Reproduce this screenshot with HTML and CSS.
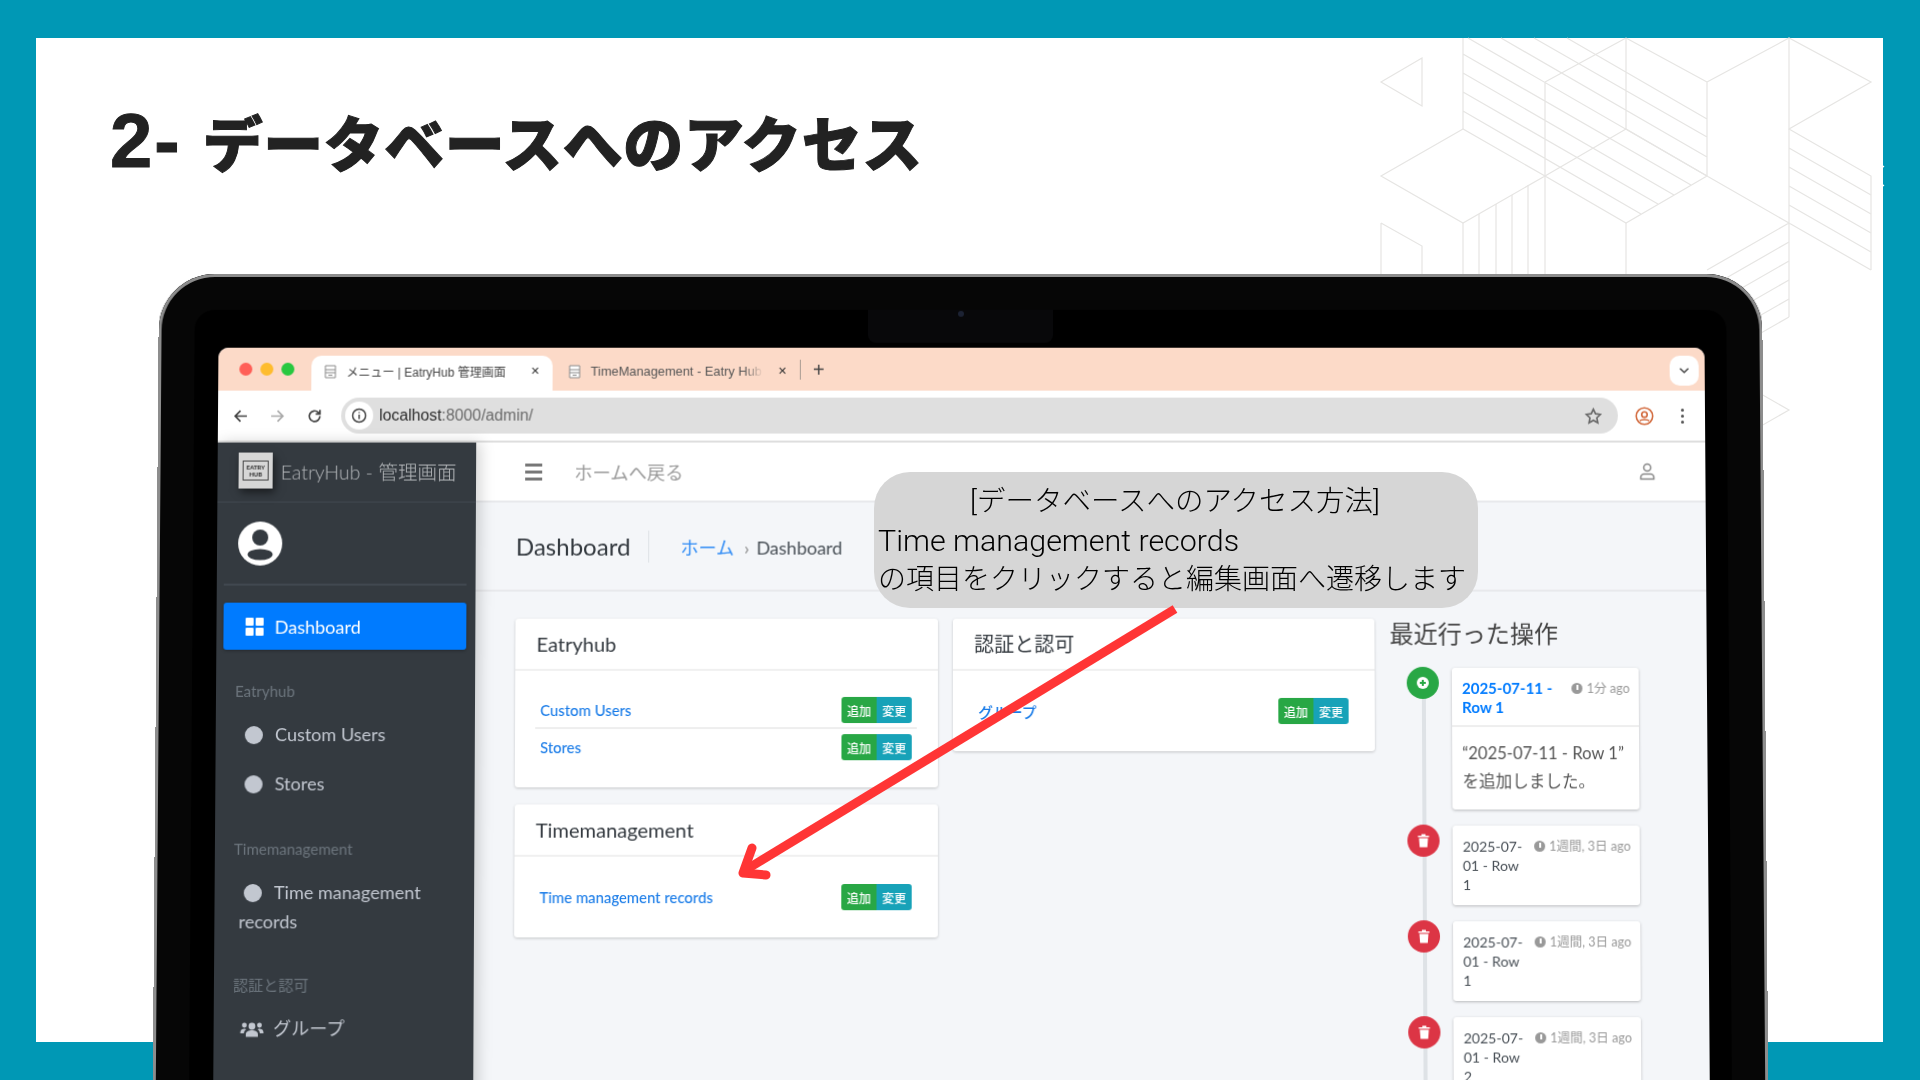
FILE: index.html
```html
<!DOCTYPE html>
<html lang="ja">

<head>
    <meta charset="UTF-8">
    <title>2- データベースへのアクセス</title>
    <link rel="stylesheet" href="styles.css">
</head>

<body>
    <div class="slide">
        <h1 class="slide-title"><span class="title-num">2-</span> データベースへのアクセス</h1>
    </div>

    <!-- background pattern, coordinates are page pixels -->
    <svg class="pattern" viewBox="0 0 1920 1080" fill="none">
        <path d="M1422 58L1381 82L1422 106ZM1463 38V129M1545 82V176M1626 38V129M1707 82V176M1789 38V129M1468 38L1707 176M1463 54L1691 185M1463 73L1674 195M1463 92L1658 204M1463 111L1641 214M1501 38L1707 157M1534 38L1707 137M1567 38L1707 119M1545 82L1626 38M1707 82L1789 38L1871 82L1789 129L1871 176V270M1707 82L1626 38" />
        <path d="M1463 129L1381 176L1463 223L1545 176ZM1626 129L1545 176L1626 223L1707 176ZM1707 176L1789 223L1707 270M1789 129V317M1789 148L1871 195M1789 167L1871 214M1789 186L1871 233M1789 205L1871 252M1789 223L1871 270" />
        <path d="M1479 214V280M1496 204V280M1512 195V280M1528 185V280M1545 176V280M1463 223V280M1381 223L1422 246V280M1381 223V280M1626 223V280M1707 289L1789 242M1707 308L1789 261M1707 327L1789 280M1707 346L1789 299M1789 317L1740 345M1740 382L1789 410L1740 438" />
        <path class="pattern-tick" d="M1884 166L1873 176L1884 186" />
    </svg>

    <div class="laptop">
        <div class="notch"><span class="camera"></span></div>
        <div class="screen">
            <div class="tabbar">
                <div class="lights"><span class="light red"></span><span class="light yellow"></span><span class="light green"></span></div>
                <div class="tab active">
                    <svg class="favicon" viewBox="0 0 12 14"><path d="M1 1h10v12H1zM1 5h10M1 8h10M4 10.500h4" /></svg>
                    <span class="tab-text">メニュー | EatryHub 管理画面</span>
                    <span class="tab-close">✕</span>
                </div>
                <div class="tab second">
                    <svg class="favicon" viewBox="0 0 12 14"><path d="M1 1h10v12H1zM1 5h10M1 8h10M4 10.500h4" /></svg>
                    <span class="tab-text fade">TimeManagement - Eatry Hub</span>
                    <span class="tab-close">✕</span>
                </div>
                <span class="tab-sep"></span>
                <span class="tab-new">+</span>
                <span class="tab-menu">
                    <svg viewBox="0 0 12 8" width="11" height="8"><path d="M1.500 1.500L6 6l4.500-4.500" /></svg>
                </span>
            </div>
            <div class="toolbar">
                <svg class="tool-icon" viewBox="0 0 16 16"><path d="M14 8H3M8 3L3 8l5 5" /></svg>
                <svg class="tool-icon off" viewBox="0 0 16 16"><path d="M2 8h11M8 3l5 5-5 5" /></svg>
                <svg class="tool-icon" viewBox="0 0 16 16"><path d="M13 8a5 5 0 1 1-1.500-3.500L13 6M13 2v4H9" /></svg>
                <div class="omnibox">
                    <span class="info"><svg viewBox="0 0 16 16" width="16" height="16"><circle cx="8" cy="8" r="6.500" /><path d="M8 7v4.500M8 4.500v1" /></svg></span>
                    <span class="url"><b>localhost</b>:8000/admin/</span>
                    <svg class="star" viewBox="0 0 16 16"><path d="M8 1.500l2 4.300 4.700.6-3.500 3.200.9 4.700L8 12l-4.100 2.300.9-4.700L1.300 6.400 6 5.800z" /></svg>
                </div>
                <svg class="profile" viewBox="0 0 18 18"><circle cx="9" cy="9" r="7.800" /><circle cx="9" cy="7.500" r="2.600" /><path d="M4.500 13.500c1.500-1.600 7.500-1.600 9 0" /></svg>
                <span class="kebab"><i></i><i></i><i></i></span>
            </div>

            <div class="page">
                <aside class="sidebar">
                    <div class="brand">
                        <span class="logo"><span class="logo-mark">EATRY<br>HUB</span></span>
                        <span class="brand-text">EatryHub - 管理画面</span>
                    </div>
                    <div class="user-panel">
                        <svg viewBox="0 0 44 44" width="44" height="44">
                            <circle cx="22" cy="22" r="22" fill="#fff" />
                            <circle cx="22" cy="16" r="8" fill="#343a40" />
                            <ellipse cx="22" cy="33" rx="12.500" ry="5.500" fill="#343a40" />
                        </svg>
                    </div>
                    <a class="nav-active">
                        <span class="grid-icon"><i></i><i></i><i></i><i></i></span>
                        Dashboard
                    </a>
                    <div class="nav-head first">Eatryhub</div>
                    <a class="nav-item"><span class="dot"></span>Custom Users</a>
                    <a class="nav-item"><span class="dot"></span>Stores</a>
                    <div class="nav-head">Timemanagement</div>
                    <a class="nav-item"><span class="dot"></span>Time management records</a>
                    <div class="nav-head last">認証と認可</div>
                    <a class="nav-item">
                        <svg class="group-icon" viewBox="0 0 24 18" width="24" height="18">
                            <circle cx="12" cy="6" r="3.400" /><circle cx="4.500" cy="5" r="2.400" /><circle cx="19.500" cy="5" r="2.400" />
                            <path d="M6 16.500v-2.500c0-3 3-4 6-4s6 1 6 4v2.500zM0.500 12c0-2.500 2-3.500 4-3.500 1 0 1.500.2 2 .6-1.500.9-2.300 2.100-2.400 3.900H0.500zM23.500 12c0-2.500-2-3.500-4-3.500-1 0-1.500.2-2 .6 1.500.9 2.300 2.100 2.400 3.900h3.600z" />
                        </svg>グループ
                    </a>
                </aside>

                <main class="main">
                    <nav class="topnav">
                        <span class="burger"><i></i><i></i><i></i></span>
                        <span class="home-link">ホームへ戻る</span>
                        <svg class="nav-user" viewBox="0 0 16 18" width="16" height="18"><circle cx="8" cy="5" r="3.500" /><path d="M1.500 16.500v-2c0-2 2-3 3-3h7c1 0 3 1 3 3v2z" /></svg>
                    </nav>
                    <header class="content-head">
                        <h2>Dashboard</h2>
                        <span class="crumbs"><a>ホーム</a><span class="crumb-sep">›</span>Dashboard</span>
                    </header>

                    <div class="columns">
                        <div class="col">
                            <section class="card">
                                <h3 class="card-head">Eatryhub</h3>
                                <div class="card-body">
                                    <div class="model-row divided">
                                        <a>Custom Users</a>
                                        <span class="btns"><span class="btn add">追加</span><span class="btn edit">変更</span></span>
                                    </div>
                                    <div class="model-row">
                                        <a>Stores</a>
                                        <span class="btns"><span class="btn add">追加</span><span class="btn edit">変更</span></span>
                                    </div>
                                </div>
                            </section>
                            <section class="card">
                                <h3 class="card-head">Timemanagement</h3>
                                <div class="card-body">
                                    <div class="model-row">
                                        <a>Time management records</a>
                                        <span class="btns"><span class="btn add">追加</span><span class="btn edit">変更</span></span>
                                    </div>
                                </div>
                            </section>
                        </div>
                        <div class="col">
                            <section class="card">
                                <h3 class="card-head">認証と認可</h3>
                                <div class="card-body">
                                    <div class="model-row">
                                        <a>グループ</a>
                                        <span class="btns"><span class="btn add">追加</span><span class="btn edit">変更</span></span>
                                    </div>
                                </div>
                            </section>
                        </div>
                        <div class="recent">
                            <h3>最近行った操作</h3>
                            <div class="timeline">
                                <div class="tl-item">
                                    <span class="tl-badge green">
                                        <svg viewBox="0 0 14 14" width="14" height="14"><circle cx="7" cy="7" r="6" fill="#fff" /><path d="M7 4v6M4 7h6" stroke="#28a745" stroke-width="2" /></svg>
                                    </span>
                                    <div class="tl-card">
                                        <div class="tl-head">
                                            <a class="tl-title">2025-07-11 - Row 1</a>
                                            <span class="tl-time"><span class="clock"></span>1分 ago</span>
                                        </div>
                                        <div class="tl-body">“2025-07-11 - Row 1”<br>を追加しました。</div>
                                    </div>
                                </div>
                                <div class="tl-item">
                                    <span class="tl-badge red">
                                        <svg viewBox="0 0 12 14" width="12" height="14"><path d="M0.500 2h11v1.500H0.500zM4 0.500h4V2H4zM1.500 4.500h9L9.800 13.500H2.200z" fill="#fff" /></svg>
                                    </span>
                                    <div class="tl-card short">
                                        <div class="tl-title dark">2025-07-01 - Row 1</div>
                                        <span class="tl-time"><span class="clock"></span>1週間, 3日 ago</span>
                                    </div>
                                </div>
                                <div class="tl-item">
                                    <span class="tl-badge red">
                                        <svg viewBox="0 0 12 14" width="12" height="14"><path d="M0.500 2h11v1.500H0.500zM4 0.500h4V2H4zM1.500 4.500h9L9.800 13.500H2.200z" fill="#fff" /></svg>
                                    </span>
                                    <div class="tl-card short">
                                        <div class="tl-title dark">2025-07-01 - Row 1</div>
                                        <span class="tl-time"><span class="clock"></span>1週間, 3日 ago</span>
                                    </div>
                                </div>
                                <div class="tl-item">
                                    <span class="tl-badge red">
                                        <svg viewBox="0 0 12 14" width="12" height="14"><path d="M0.500 2h11v1.500H0.500zM4 0.500h4V2H4zM1.500 4.500h9L9.800 13.500H2.200z" fill="#fff" /></svg>
                                    </span>
                                    <div class="tl-card short">
                                        <div class="tl-title dark">2025-07-01 - Row 2</div>
                                        <span class="tl-time"><span class="clock"></span>1週間, 3日 ago</span>
                                    </div>
                                </div>
                            </div>
                        </div>
                    </div>
                </main>
            </div>
        </div>
    </div>

    <!-- annotation on top of the laptop -->
    <div class="callout">
        <div class="callout-title">[データベースへのアクセス方法]</div>
        <div class="callout-latin">Time management records</div>
        <div>の項目をクリックすると編集画面へ遷移します</div>
    </div>
    <svg class="arrow" viewBox="0 0 1920 1080" fill="none">
        <path d="M1175 609L744 871" stroke-linecap="butt" />
        <path d="M752 848L743 873L766 875" stroke-linecap="round" stroke-linejoin="round" />
    </svg>
</body>

</html>
```

FILE: styles.css
```css
html,
body {
    margin: 0;
    height: 100%;
    overflow: hidden;
}

body {
    position: relative;
    background: #0098b5;
    font-family: "Lato", "Noto Sans CJK JP", sans-serif;
    color: #343a40;
}

h1,
h2,
h3 {
    margin: 0;
    font-weight: 400;
}

/* slide */
.slide {
    background: #fff;
    margin: 0 37px 0 36px;
    height: 1004px;
    position: relative;
    top: 38px;
    padding: 65px 0 0 74px;
    box-sizing: border-box;
}

.slide-title {
    font-family: "Noto Sans CJK JP", sans-serif;
    font-weight: 900;
    font-size: 60px;
    line-height: 76px;
    color: #222;
    letter-spacing: 0.5px;
    -webkit-text-stroke: 1px #222;
    white-space: nowrap;
}

.title-num {
    font-family: "Liberation Sans", sans-serif;
    font-weight: 700;
    font-size: 76px;
    line-height: 60px;
    letter-spacing: 2px;
    margin-right: 7px;
}

.pattern {
    position: absolute;
    inset: 0;
    width: 1920px;
    height: 1080px;
    stroke: #e6e5e3;
    stroke-width: 1.2;
}

.pattern-tick {
    stroke: #fff;
}

/* laptop */
.laptop {
    position: absolute;
    left: 159px;
    top: 274px;
    width: 1603px;
    height: 900px;
    box-sizing: border-box;
    padding: 74px 58px 0 60px;
    background: #000;
    border-radius: 56px 56px 0 0;
    box-shadow: inset 0 0 0 3px #8d8d8d, inset 0 0 0 36px #060606;
    transform: perspective(2000px) rotateX(1.1deg) scaleY(0.996);
    transform-origin: 50% 0;
}

.notch {
    position: absolute;
    left: 709px;
    top: 36px;
    width: 185px;
    height: 32px;
    background: #08080a;
    border-radius: 0 0 8px 8px;
    display: flex;
    justify-content: center;
    padding-top: 1px;
}

.camera {
    width: 6px;
    height: 6px;
    border-radius: 50%;
    background: #1c2233;
}

.screen {
    height: 800px;
    border-radius: 10px 10px 0 0;
    overflow: hidden;
    background: #f4f6f9;
    filter: blur(0.5px);
    display: flex;
    flex-direction: column;
}

/* browser tabs */
.tabbar {
    height: 43px;
    flex: none;
    background: #fcdac8;
    display: flex;
    align-items: flex-end;
    font-size: 12px;
    color: #444;
    font-family: "Liberation Sans", "Noto Sans CJK JP", sans-serif;
}

.lights {
    display: flex;
    gap: 8px;
    align-self: center;
    margin: 0 17px 0 21px;
}

.light {
    width: 13px;
    height: 13px;
    border-radius: 50%;
}

.light.red {
    background: #ff5f57;
}

.light.yellow {
    background: #febc2e;
}

.light.green {
    background: #28c840;
}

.tab {
    width: 241px;
    height: 35px;
    box-sizing: border-box;
    padding: 0 10px 4px 13px;
    display: flex;
    align-items: center;
    border-radius: 10px 10px 0 0;
    flex: none;
}

.tab.active {
    background: #fff;
}

.tab.second {
    width: 252px;
    padding-left: 16px;
    padding-right: 15px;
    font-size: 12.800px;
}

.favicon {
    width: 12px;
    height: 14px;
    flex: none;
    fill: #fff;
    stroke: #8a8a8a;
    stroke-width: 1;
    margin-right: 10px;
}

.tab-text {
    flex: 1;
    white-space: nowrap;
}

.tab-text.fade {
    color: #555;
    -webkit-mask-image: linear-gradient(90deg, #000 86%, transparent 97%);
    mask-image: linear-gradient(90deg, #000 86%, transparent 97%);
}

.tab-close {
    font-size: 11px;
    margin-left: 9px;
    width: 12px;
    color: #333;
}

.tab-sep {
    width: 1px;
    height: 20px;
    background: #a89b92;
    align-self: center;
    margin: 0 12px 0 -5px;
}

.tab-new {
    font-size: 20px;
    align-self: center;
    line-height: 1;
}

.tab-menu {
    margin: 0 6px 5px auto;
    width: 29px;
    height: 30px;
    background: #fff;
    border-radius: 10px;
    display: flex;
    align-items: center;
    justify-content: center;
}

.tab-menu path {
    fill: none;
    stroke: #444;
    stroke-width: 1.6;
}

/* browser toolbar */
.toolbar {
    flex: none;
    background: #fff;
    border-bottom: 2px solid #dedede;
    box-sizing: border-box;
    height: 52px;
    display: flex;
    align-items: center;
    padding: 0 0 0 14px;
}

.tool-icon {
    width: 17px;
    height: 17px;
    margin-right: 20px;
    fill: none;
    stroke: #444;
    stroke-width: 1.600;
    flex: none;
}

.tool-icon.off {
    stroke: #aaa;
}

.omnibox {
    width: 1275px;
    height: 36px;
    margin-left: -2px;
    background: #dfdfdf;
    border-radius: 18px;
    display: flex;
    align-items: center;
    flex: none;
    font-family: "Liberation Sans", sans-serif;
}

.info {
    width: 28px;
    height: 28px;
    margin-left: 4px;
    background: #fff;
    border-radius: 50%;
    display: flex;
    align-items: center;
    justify-content: center;
}

.info svg {
    fill: none;
    stroke: #444;
    stroke-width: 1.500;
}

.url {
    font-size: 15.800px;
    color: #6a6a6a;
    margin-left: 6px;
}

.url b {
    font-weight: 400;
    color: #2b2b2b;
}

.star {
    width: 17px;
    height: 17px;
    margin-left: auto;
    margin-right: 16px;
    fill: none;
    stroke: #666;
    stroke-width: 1.500;
}

.profile {
    width: 19px;
    height: 19px;
    margin-left: 17px;
    fill: none;
    stroke: #d2693c;
    stroke-width: 1.500;
    flex: none;
}

.kebab {
    display: flex;
    flex-direction: column;
    gap: 3px;
    margin-left: 27px;
}

.kebab i {
    width: 3px;
    height: 3px;
    border-radius: 50%;
    background: #555;
}

/* admin page */
.page {
    flex: 1;
    display: flex;
    min-height: 0;
}

.sidebar {
    width: 258px;
    flex: none;
    box-sizing: border-box;
    padding: 0 9px 0 7px;
    background: #343a40;
    color: #c2c7d0;
    font-size: 18px;
    box-shadow: 4px 0 14px rgba(0, 0, 0, 0.18);
    position: relative;
}

.brand {
    height: 60px;
    margin: 0 -9px 0 -7px;
    padding: 0 0 3px 21px;
    box-sizing: border-box;
    border-bottom: 1px solid #414850;
    display: flex;
    align-items: center;
    gap: 8px;
}

.logo {
    width: 34px;
    height: 36px;
    background: #d6d6d6;
    box-shadow: 2px 4px 8px rgba(0, 0, 0, 0.5);
    display: flex;
    align-items: center;
    justify-content: center;
}

.logo-mark {
    width: 24px;
    border: 1px solid #444;
    font-size: 6px;
    line-height: 7px;
    font-weight: 900;
    color: #333;
    text-align: center;
    padding: 2px 0;
}

.brand-text {
    font-size: 19.500px;
    font-weight: 300;
    color: #b4b7ba;
    white-space: nowrap;
}

.user-panel {
    height: 83px;
    box-sizing: border-box;
    padding: 19px 0 0 14px;
    border-bottom: 2px solid #414850;
}

.nav-active {
    margin-top: 17px;
    height: 47px;
    padding-left: 22px;
    display: flex;
    align-items: center;
    gap: 11px;
    background: #007bff;
    color: #fff;
    border-radius: 3px;
    box-shadow: 0 1px 3px rgba(0, 0, 0, 0.3);
}

.grid-icon {
    display: grid;
    grid-template-columns: 8px 8px;
    gap: 2px;
}

.grid-icon i {
    height: 8px;
    background: #fff;
    border-radius: 1px;
}

.nav-head {
    height: 34px;
    line-height: 34px;
    margin: 23px 0 2px 12px;
    font-size: 15px;
    color: #6c757d;
}

.nav-head.first {
    margin-top: 24px;
}

.nav-head.last {
    margin-top: 21px;
}

.nav-item {
    display: block;
    padding: 10px 20px 10px 17px;
    line-height: 29px;
}

.dot {
    display: inline-block;
    width: 18px;
    height: 18px;
    margin: 0 12px 0 5px;
    vertical-align: -3px;
    border-radius: 50%;
    background: #c2c7d0;
}

.group-icon {
    fill: #c2c7d0;
    margin-right: 9px;
    margin-left: 2px;
    vertical-align: -3px;
}

.main {
    flex: 1;
    min-width: 0;
}

.topnav {
    height: 60px;
    box-sizing: border-box;
    background: #fff;
    border-bottom: 2px solid #e8e9ec;
    display: flex;
    align-items: center;
    padding: 0 50px 0 49px;
}

.burger {
    display: flex;
    flex-direction: column;
    gap: 4px;
    margin-right: 32px;
}

.burger i {
    width: 17px;
    height: 3px;
    background: #777;
}

.home-link {
    font-size: 18.300px;
    color: #9a9a9a;
}

.nav-user {
    margin-left: auto;
    fill: #fff;
    stroke: #888;
    stroke-width: 1.500;
}

.content-head {
    height: 89px;
    box-sizing: border-box;
    border-bottom: 2px solid #e8e9ec;
    display: flex;
    align-items: center;
    padding: 0 0 0 40px;
}

.content-head h2 {
    font-size: 24px;
    color: #343a40;
    padding-right: 18px;
    margin-right: 31px;
    line-height: 32px;
    border-right: 1px solid #dee2e6;
}

.crumbs {
    font-size: 18px;
    color: #495057;
}

.crumbs a {
    color: #2f8bf5;
}

.crumb-sep {
    color: #888;
    margin: 0 7px 0 10px;
}

.columns {
    display: grid;
    grid-template-columns: 421px 420px 1fr;
    column-gap: 15px;
    padding: 27px 0 0 40px;
    align-items: start;
}

.col {
    display: flex;
    flex-direction: column;
    gap: 17px;
}

.card {
    background: #fff;
    border-radius: 3px;
    box-shadow: 0 1px 3px rgba(0, 0, 0, 0.2);
}

.card-head {
    height: 52px;
    box-sizing: border-box;
    padding-left: 21px;
    line-height: 51px;
    font-size: 20px;
    color: #343a40;
    border-bottom: 2px solid #f0f0f0;
}

.card-body {
    padding: 22px 21px 22px 20px;
}

.model-row {
    height: 36px;
    box-sizing: border-box;
    display: flex;
    align-items: center;
    justify-content: space-between;
    padding: 0 5px;
    font-size: 14.800px;
    font-weight: 500;
    color: #1a7ce8;
}

.model-row.divided {
    border-bottom: 2px solid #eee;
}

.btns {
    display: flex;
    height: 26px;
    font-size: 12px;
    color: #fff;
    border-radius: 3px;
    overflow: hidden;
}

.btn {
    width: 35px;
    display: flex;
    align-items: center;
    justify-content: center;
}

.btn.add {
    background: #28a745;
}

.btn.edit {
    background: #17a2b8;
}

/* recent actions */
.recent h3 {
    font-size: 24px;
    line-height: 28px;
    color: #444;
    margin: 1px 0 20px;
}

.timeline {
    position: relative;
    padding-left: 62px;
    width: 186px;
    display: flex;
    flex-direction: column;
    gap: 16px;
}

.timeline::before {
    content: "";
    position: absolute;
    left: 32px;
    top: 0;
    bottom: -200px;
    width: 4px;
    background: #dee2e6;
}

.tl-item {
    position: relative;
}

.tl-badge {
    position: absolute;
    left: -45px;
    top: -1px;
    width: 32px;
    height: 32px;
    border-radius: 50%;
    display: flex;
    align-items: center;
    justify-content: center;
}

.tl-badge.green {
    background: #28a745;
}

.tl-badge.red {
    background: #dc3545;
}

.tl-card {
    background: #fff;
    border-radius: 3px;
    box-shadow: 0 1px 3px rgba(0, 0, 0, 0.25);
    font-size: 15px;
}

.tl-head {
    height: 59px;
    box-sizing: border-box;
    padding: 11px 9px 0 10px;
    border-bottom: 2px solid #eee;
    display: flex;
    justify-content: space-between;
    line-height: 19px;
}

.tl-title {
    width: 100px;
    color: #007bff;
    font-weight: 700;
}

.tl-title.dark {
    color: #495057;
    font-weight: 400;
    font-size: 14px;
    width: 64px;
}

.tl-time {
    font-size: 12.500px;
    color: #999;
    white-space: nowrap;
    line-height: 19px;
}

.tl-head .tl-title {
    width: 92px;
}

/* clock face, the hand is a small white tick */
.clock {
    position: relative;
    display: inline-block;
    width: 11px;
    height: 11px;
    border-radius: 50%;
    background: #999;
    margin-right: 4px;
    vertical-align: -1px;
}

.clock::after {
    content: "";
    position: absolute;
    left: 5px;
    top: 2px;
    width: 2px;
    height: 5px;
    background: #fff;
}

.tl-body {
    padding: 12px 8px 14px 10px;
    font-size: 16.500px;
    line-height: 28px;
    color: #555;
    white-space: nowrap;
}

.tl-card.short {
    height: 79px;
    box-sizing: border-box;
    padding: 11px 9px 0 10px;
    display: flex;
    justify-content: space-between;
    line-height: 19px;
}

/* annotation */
.callout {
    position: absolute;
    left: 874px;
    top: 472px;
    width: 604px;
    height: 136px;
    box-sizing: border-box;
    padding: 10px 0 0 4px;
    background: #d6d6d6;
    border-radius: 36px;
    font-family: "Roboto", "Noto Sans CJK JP", sans-serif;
    font-size: 28px;
    font-weight: 300;
    line-height: 39px;
    color: #000;
    white-space: nowrap;
}

.callout-title {
    text-align: center;
    font-size: 28.500px;
    margin-left: -6px;
}

.callout-latin {
    font-size: 30.400px;
}

.arrow {
    position: absolute;
    inset: 0;
    width: 1920px;
    height: 1080px;
    stroke: #ff3535;
    stroke-width: 9;
}
```
